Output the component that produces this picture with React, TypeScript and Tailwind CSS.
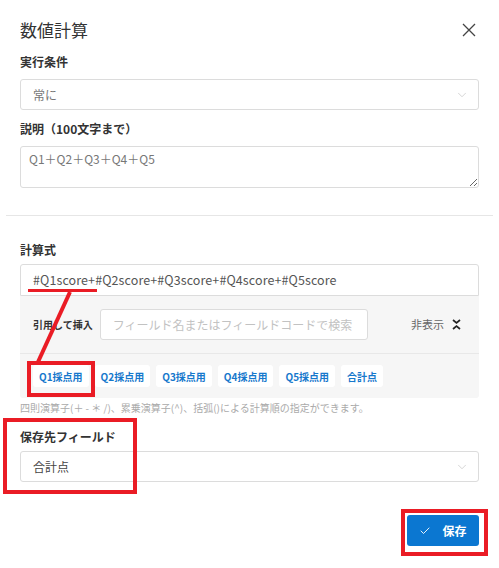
import { Check, ChevronDown } from "lucide-react";

const font = { fontFamily: '"Noto Sans CJK JP", "Noto Sans", sans-serif' };

const chips = ["Q1採点用", "Q2採点用", "Q3採点用", "Q4採点用", "Q5採点用", "合計点"];

function Select({ value, tone }: { value: string; tone: string }) {
  return (
    <div className="flex h-[31px] items-center justify-between rounded-[3px] border border-[#dcdcdc] pl-[12px] pr-[9px]">
      <span className={`text-[12px] ${tone}`}>{value}</span>
      <ChevronDown size={14} strokeWidth={1.2} className="text-[#c4c4c4]" />
    </div>
  );
}

function Label({ children }: { children: React.ReactNode }) {
  return <div className="text-[12px] font-bold leading-[18px] text-[#333]">{children}</div>;
}

export default function App() {
  return (
    <div className="relative h-[568px] w-[499px] overflow-hidden bg-white" style={font}>
      {/* Header */}
      <div className="flex items-center justify-between px-[20px] pt-[17px]">
        <h1 className="text-[17px] leading-[26px] text-[#333]">数値計算</h1>
        <svg width="14" height="14" viewBox="0 0 14 14" className="mr-[3px] text-[#444]">
          <path d="M1 1 13 13M13 1 1 13" stroke="currentColor" strokeWidth="1.3" fill="none" />
        </svg>
      </div>

      <div className="px-[20px]">
        <div className="mt-[10px]">
          <Label>実行条件</Label>
        </div>
        <div className="mt-[8px]">
          <Select value="常に" tone="text-[#777]" />
        </div>

        <div className="mt-[10px]">
          <Label>説明（100文字まで）</Label>
        </div>
        <textarea
          readOnly
          defaultValue="Q1＋Q2＋Q3＋Q4＋Q5"
          className="mt-[8px] block h-[42px] w-full rounded-[3px] border border-[#dcdcdc] px-[8px] py-[4px] text-[12px] leading-[16px] text-[#777] outline-none"
        />
      </div>

      <div className="mx-[6px] mt-[27px] h-px bg-[#e6e6e6]" />

      <div className="px-[20px]">
        <div className="mt-[25px]">
          <Label>計算式</Label>
        </div>
        <div className="mt-[5px] flex h-[32px] items-center rounded-t-[3px] border border-[#dcdcdc] px-[12px] text-[12.5px] tracking-[0.1px] text-[#555]">
          #Q1score+#Q2score+#Q3score+#Q4score+#Q5score
        </div>

        {/* Reference panel */}
        <div className="rounded-b-[3px] bg-[#f6f6f6]">
          <div className="flex h-[58px] items-center border-b border-[#e8e8e8] pl-[13px] pr-[18px]">
            <span className="text-[10px] font-bold text-[#333]">引用して挿入</span>
            <div className="ml-[7px] flex h-[31px] w-[268px] items-center rounded-[3px] border border-[#dcdcdc] bg-white px-[12px] text-[12px] text-[#c2c2c2]">
              フィールド名またはフィールドコードで検索
            </div>
            <span className="ml-auto text-[11px] text-[#666]">非表示</span>
            <svg width="9" height="11" viewBox="0 0 9 11" className="ml-[8px]">
              <path d="M1 1 4.5 4 8 1M1 10 4.5 7 8 10" stroke="#222" strokeWidth="1.7" fill="none" />
            </svg>
          </div>
          <div className="flex h-[44px] items-center gap-[6px] pl-[13px]">
            {chips.map((c) => (
              <span
                key={c}
                className="flex h-[22px] items-center rounded-[3px] bg-white px-[6px] text-[10px] font-bold text-[#1678cc]"
              >
                {c}
              </span>
            ))}
          </div>
        </div>

        <p className="mt-[2px] text-[10px] leading-[16px] text-[#aaa]">
          四則演算子(＋ - ＊ /)、累乗演算子(^)、括弧()による計算順の指定ができます。
        </p>

        <div className="mt-[12px]">
          <Label>保存先フィールド</Label>
        </div>
        <div className="mt-[5px]">
          <Select value="合計点" tone="text-[#444]" />
        </div>

        <div className="mt-[33px] flex justify-end">
          <button className="flex h-[31px] w-[72px] items-center justify-center gap-[11px] rounded-[3px] bg-[#0b77d1] text-[12px] font-bold text-white">
            <Check size={12} strokeWidth={1.8} />
            保存
          </button>
        </div>
      </div>

      {/* Red annotations */}
      <svg className="pointer-events-none absolute left-0 top-0" width="499" height="568">
        <g stroke="#ea1c25" fill="none" strokeWidth="4">
          <line x1="28" y1="290.5" x2="97" y2="290.5" strokeWidth="3" />
          <line x1="70" y1="292" x2="38" y2="362" />
          <rect x="29" y="363" width="64" height="32" />
          <rect x="5" y="420" width="130" height="72" />
          <rect x="403" y="511" width="83" height="43" />
        </g>
      </svg>
    </div>
  );
}
